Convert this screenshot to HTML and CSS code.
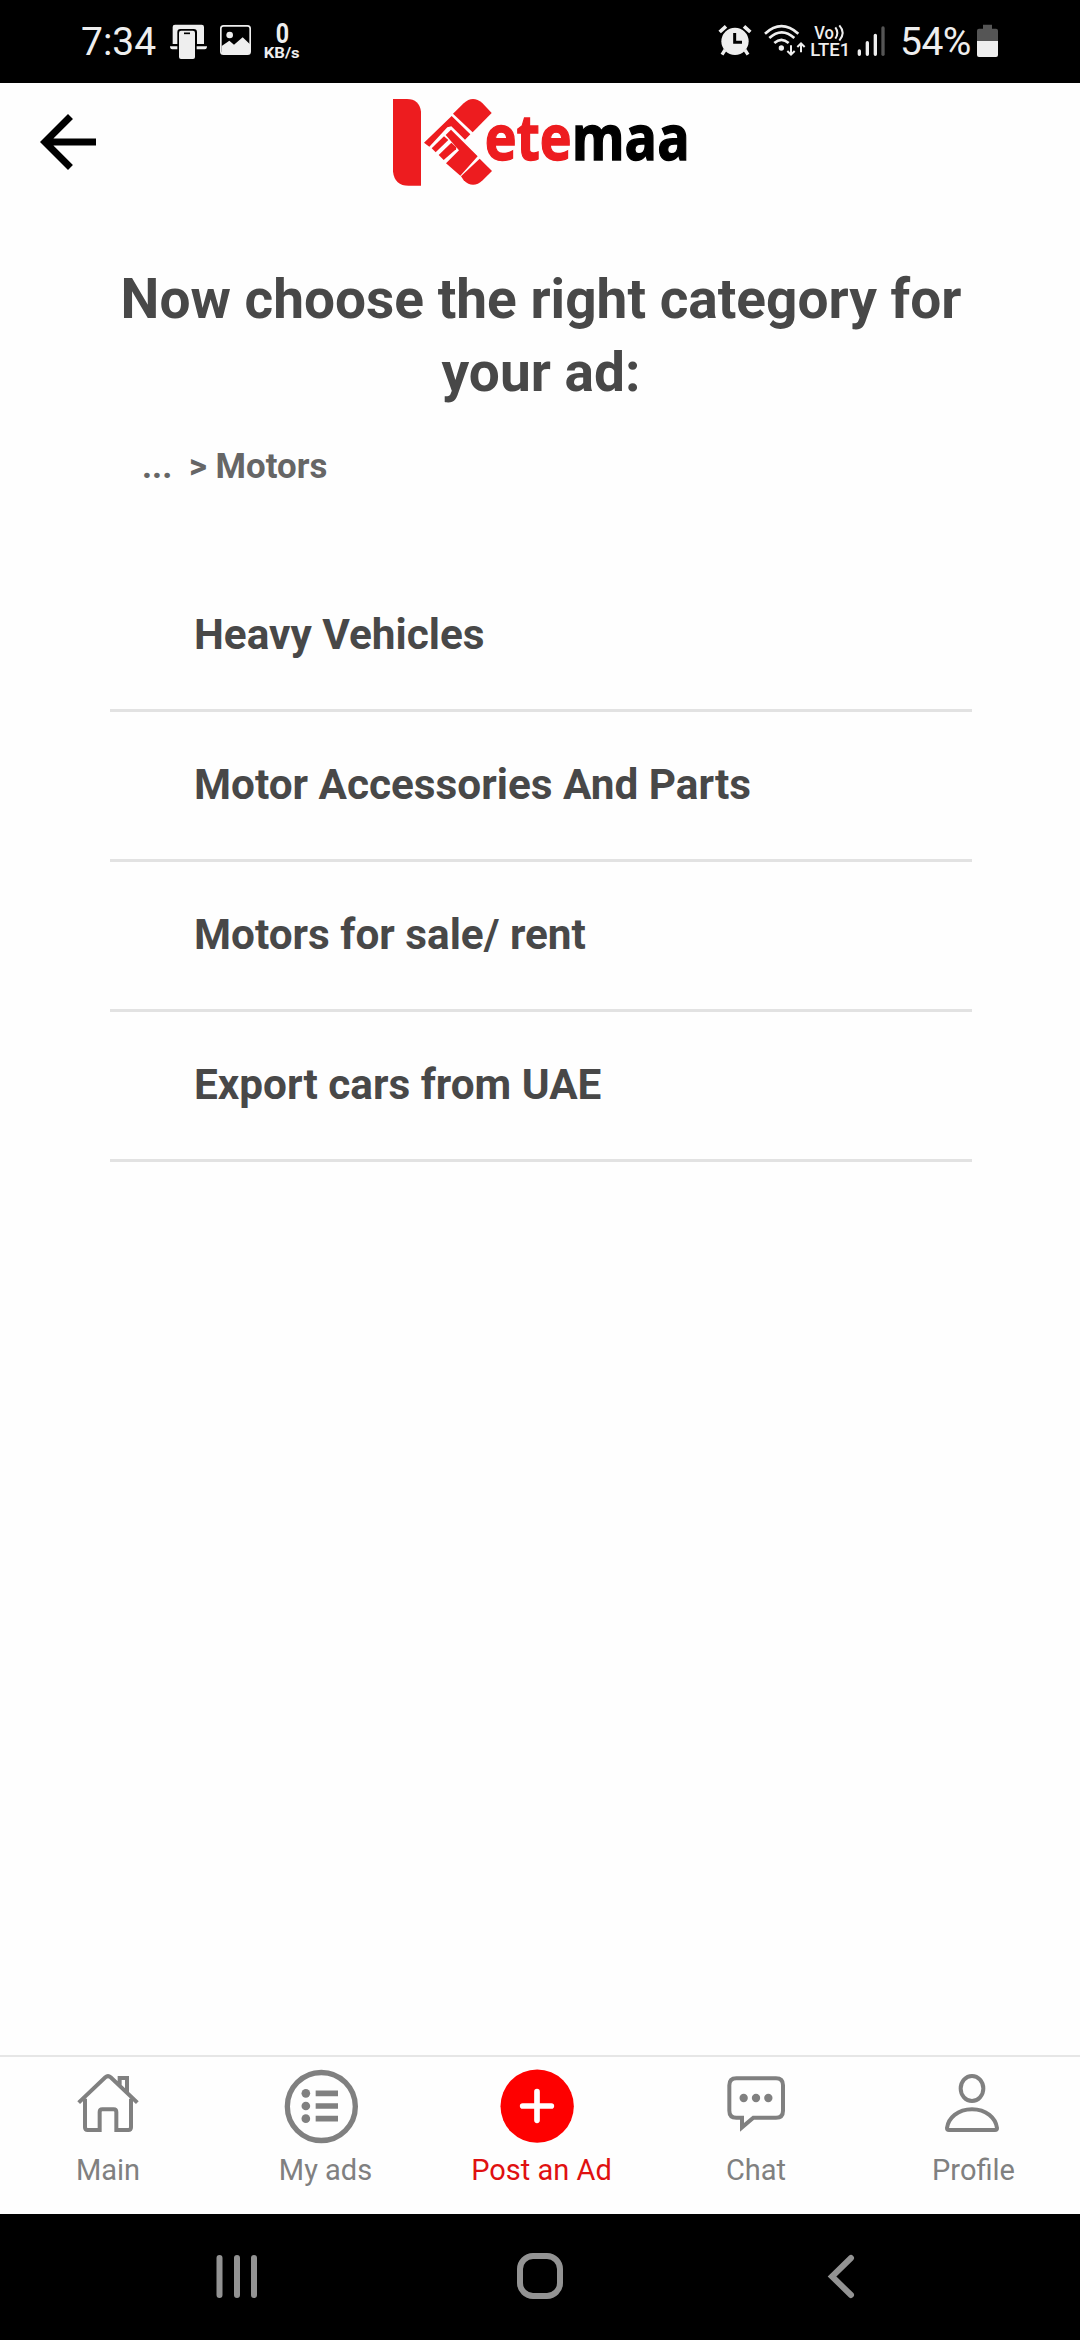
FILE: index.html
```html
<!DOCTYPE html>
<html lang="en">
<head>
    <meta charset="UTF-8">
    <meta name="viewport" content="width=device-width, initial-scale=1.0">
    <title>Ketemaa</title>
    <link rel="stylesheet" href="styles.css">
</head>
<body>
    <div class="screen">
        <div class="status-bar">
            <div class="status-left">
                <span class="time">7:34</span>
                <svg class="cast-icon" width="37" height="84" viewBox="330 0 111 252">
                    <path d="M338 132V81q0-7 7-7h80q7 0 7 7v51h-21V97q0-10-10-10h-40q-9 0-9 10v35z" fill="#eee"/>
                    <path d="M330 139h22v9h-15q-7 0-7-9zM410 139h31q0 9-7 9h-24z" fill="#eee"/>
                    <rect x="357" y="92" width="48" height="85" rx="6" fill="#eee"/>
                    <path d="M372 100h18" stroke="#000" stroke-width="5"/>
                </svg>
                <svg class="image-icon" width="31" height="84" viewBox="480 0 93 252">
                    <rect x="482.500" y="77.500" width="88" height="85" rx="8" fill="none" stroke="#eee" stroke-width="5"/>
                    <circle cx="509" cy="105" r="10" fill="#eee"/>
                    <path d="M485 138l23-16 14 12 26-22 22 21v23q0 6-6 6h-73q-6 0-6-6z" fill="#eee"/>
                </svg>
                <svg width="38" height="84" viewBox="609 0 114 252" fill="#eee">
                    <text x="647" y="129" class="speed-value" textLength="40" lengthAdjust="spacingAndGlyphs">0</text>
                    <text x="611" y="175" class="speed-unit" textLength="108" lengthAdjust="spacingAndGlyphs">KB/s</text>
                </svg>
            </div>
            <div class="status-right">
                <svg class="alarm-icon" width="34" height="84" viewBox="54 0 102 252">
                    <circle cx="105" cy="124" r="41" fill="#eee"/>
                    <path d="M59 96l19-17M151 96l-19-17" stroke="#eee" stroke-width="11"/>
                    <path d="M75 150l-9 14M135 150l9 14" stroke="#eee" stroke-width="10"/>
                    <path d="M104 99v28h22" fill="none" stroke="#000" stroke-width="9"/>
                </svg>
                <svg class="wifi-icon" width="43" height="84" viewBox="189 0 129 252" fill="none" stroke="#eee">
                    <path d="M195 101q49-45 100 0M208 114q37-34 75 0M223 129q21-19 43 0" stroke-width="8"/>
                    <circle cx="244" cy="144" r="8" fill="#eee" stroke="none"/>
                    <path d="M273 136v28M262 153l11 11 11-11M303 157v-28M292 141l11-11 11 11" stroke-width="6"/>
                </svg>
                <svg class="lte-icon" width="40" height="84" viewBox="330 0 120 252" fill="#eee">
                    <text x="343" y="116" class="lte-text" textLength="59" lengthAdjust="spacingAndGlyphs">Vo</text>
                    <path d="M406 82q12 16 0 34M418 76q20 22 0 46" fill="none" stroke="#eee" stroke-width="6"/>
                    <text x="331" y="168" class="lte-text" textLength="120" lengthAdjust="spacingAndGlyphs">LTE1</text>
                </svg>
                <svg class="signal-icon" width="29" height="84" viewBox="471 0 87 252" stroke-width="10" stroke-linecap="round">
                    <path d="M478 153v10M502 128v35M526 106v57" stroke="#eee"/>
                    <path d="M549 84v79" stroke="#555"/>
                </svg>
                <span class="percent">54%</span>
                <svg width="21" height="84" viewBox="831 0 63 252">
                    <path d="M831 123V92q0-6 6-6h12V74h27v12h12q6 0 6 6v31z" fill="#555"/>
                    <path d="M831 123h63v42q0 6-6 6h-51q-6 0-6-6z" fill="#eee"/>
                </svg>
            </div>
        </div>

        <div class="header">
            <svg class="back-icon" width="84" height="84" viewBox="0 0 24 24">
                <path d="M20 11H7.830l5.590-5.590L12 4l-8 8 8 8 1.410-1.410L7.830 13H20z"/>
            </svg>
            <svg class="logo" width="298" height="116" viewBox="33 0 894 348">
                <path d="M39 45h42q37 0 42 38v222H86q-42 0-47-42z" fill="#ed1c1f"/>
                <!-- handshake -->
                <g transform="translate(120 30)" fill="#ed1c1f">
                    <path d="M99 59l32-31q27-26 56-1l28 30-57 58z"/>
                    <path d="M12 146l83-80 56 55-16 16-41-40-12 3-54 58z"/>
                    <path d="M77 123l16-16 80 80-52 58-43-37 39-39z"/>
                    <path d="M35 163l37-36 13 11-38 37z"/>
                    <path d="M56 183l38-37 15 14-1 6-37 32z"/>
                    <path d="M123 247l56-53 37 37-28 28q-29 27-57 0z"/>
                </g>
                <text x="314" y="229" class="logo-text" textLength="615" lengthAdjust="spacingAndGlyphs"><tspan class="logo-red">ete</tspan>maa</text>
            </svg>
        </div>

        <div class="content">
            <h1>Now choose the right category for your ad:</h1>
            <div class="breadcrumb"><span class="dots">...</span><span>&gt; Motors</span></div>
            <ul class="categories">
                <li>Heavy Vehicles</li>
                <li>Motor Accessories And Parts</li>
                <li>Motors for sale/ rent</li>
                <li>Export cars from UAE</li>
            </ul>
        </div>

        <div class="tabs">
            <div class="tab">
                <svg width="80" height="80" viewBox="204 78 240 240">
                    <path d="M236 188l80-76q8-7 16 0l80 76M255 176v86q0 8 8 8h36v-54q0-8 8-8h34q8 0 8 8v54h36q8 0 8-8v-86M359 139v-25h22v43"/>
                </svg>
                <span>Main</span>
            </div>
            <div class="tab">
                <svg width="80" height="80" viewBox="852 78 240 240">
                    <circle cx="964" cy="199.500" r="102" stroke-width="16"/>
                    <path d="M947 160h67M947 198h67M947 236h67" stroke-width="17"/>
                    <g class="filled">
                        <circle cx="917.500" cy="160" r="13"/>
                        <circle cx="917.500" cy="198" r="13"/>
                        <circle cx="917.500" cy="236" r="13"/>
                    </g>
                </svg>
                <span class="nudge">My ads</span>
            </div>
            <div class="tab active">
                <svg width="80" height="80" viewBox="300 78 240 240">
                    <circle class="filled" cx="411.500" cy="198.500" r="110"/>
                    <path class="plus" d="M368 198h86M411 155v86"/>
                </svg>
                <span class="nudge">Post an Ad</span>
            </div>
            <div class="tab">
                <svg width="80" height="80" viewBox="108 78 240 240">
                    <path d="M169 115h119q21 0 21 21v76q0 21-21 21h-68l-34 29v-29h-17q-21 0-21-21v-76q0-21 21-21z"/>
                    <g class="filled">
                        <circle cx="191" cy="174" r="12.500"/>
                        <circle cx="228" cy="174" r="12.500"/>
                        <circle cx="265" cy="174" r="12.500"/>
                    </g>
                </svg>
                <span>Chat</span>
            </div>
            <div class="tab">
                <svg width="80" height="80" viewBox="756 78 240 240">
                    <ellipse cx="876" cy="145.500" rx="34" ry="37.500"/>
                    <path d="M801 264c4-30 32-56 75-56s71 26 75 56q0 6-6 6H807q-6 0-6-6z"/>
                </svg>
                <span class="nudge">Profile</span>
            </div>
        </div>

        <div class="nav-bar">
            <svg width="46" height="50" viewBox="0 0 46 50">
                <path d="M5.500 6v37M23 6v37M40 6v37"/>
            </svg>
            <svg width="50" height="50" viewBox="0 0 50 50">
                <rect x="3" y="4" width="40" height="40" rx="13"/>
            </svg>
            <svg width="36" height="50" viewBox="0 0 36 50">
                <path d="M28 6L9 24.500 28 43"/>
            </svg>
        </div>
    </div>
</body>
</html>
```
FILE: styles.css
```css
body {
    margin: 0;
    font-family: Roboto, "Liberation Sans", sans-serif;
    background-color: #fefefe;
}
svg {
    display: block;
    flex-shrink: 0;
}
.screen {
    display: flex;
    flex-direction: column;
    width: 1080px;
    height: 2340px;
    overflow: hidden;
}
.status-bar {
    display: flex;
    justify-content: space-between;
    height: 83px;
    padding: 0 82px 0 81px;
    background-color: #000;
    color: #eee;
}
.status-left, .status-right {
    display: flex;
}
.time, .percent {
    font-size: 39px;
    line-height: 84px;
    white-space: nowrap;
}
.time {
    width: 89px;
}
.percent {
    width: 77px;
    letter-spacing: -0.5px;
}
.cast-icon {
    margin-right: 13px;
}
.image-icon {
    margin-right: 12px;
}
.alarm-icon {
    margin-right: 11px;
}
.wifi-icon {
    margin-right: 4px;
}
.lte-icon {
    margin-right: 7px;
}
.signal-icon {
    margin-right: 14px;
}
.speed-value {
    font-size: 84px;
    font-weight: 700;
}
.speed-unit {
    font-size: 44px;
    font-weight: 700;
}
.lte-text {
    font-size: 54px;
    font-weight: 500;
}
.header {
    display: grid;
    grid-template-columns: 1fr auto 1fr;
    align-items: center;
    height: 118px;
}
.back-icon {
    margin-left: 26px;
}
.logo {
    overflow: visible;
}
.logo-text {
    font-family: "Open Sans", "Noto Sans", sans-serif;
    font-size: 188px;
    font-weight: 700;
    stroke: #000;
    stroke-width: 4;
}
.logo-red {
    fill: #ed1c1f;
    stroke: #ed1c1f;
}
.content {
    flex: 1;
    padding: 0 108px 0 110px;
}
h1 {
    margin: 62px 0 0;
    font-size: 55px;
    font-weight: 700;
    line-height: 73px;
    text-align: center;
    color: #484848;
}
.breadcrumb {
    display: flex;
    margin-top: 36px;
    padding-left: 32px;
    font-size: 34.8px;
    font-weight: 700;
    line-height: 42px;
    color: #666;
}
.dots {
    width: 47px;
}
.categories {
    margin: 75px 0 0;
    padding: 0;
    list-style: none;
}
.categories li {
    box-sizing: border-box;
    height: 150px;
    padding-left: 84px;
    border-bottom: 3px solid #e2e2e2;
    font-size: 42.3px;
    font-weight: 700;
    line-height: 145px;
    color: #484848;
}
.tabs {
    display: grid;
    grid-template-columns: repeat(5, 1fr);
    box-sizing: border-box;
    height: 159px;
    padding-top: 9px;
    border-top: 2px solid #e6e6e6;
}
.tab {
    display: flex;
    flex-direction: column;
    align-items: center;
    font-size: 29px;
    line-height: 34px;
    color: #808080;
}
.tab svg {
    margin-bottom: 7px;
    fill: none;
    stroke: #808080;
    stroke-width: 12;
}
.tab .filled {
    fill: #808080;
    stroke: none;
}
.tab.active {
    color: #e01010;
}
.tab.active .filled {
    fill: #fe0000;
}
.tab .plus {
    stroke: #fff;
    stroke-width: 17;
    stroke-linecap: round;
}
.nudge {
    padding-left: 3px;
}
.nav-bar {
    display: flex;
    justify-content: space-between;
    box-sizing: border-box;
    height: 126px;
    padding: 38px 221px 0 214px;
    background-color: #000;
}
.nav-bar svg {
    fill: none;
    stroke: #939393;
    stroke-width: 6;
    stroke-linecap: round;
}
```
